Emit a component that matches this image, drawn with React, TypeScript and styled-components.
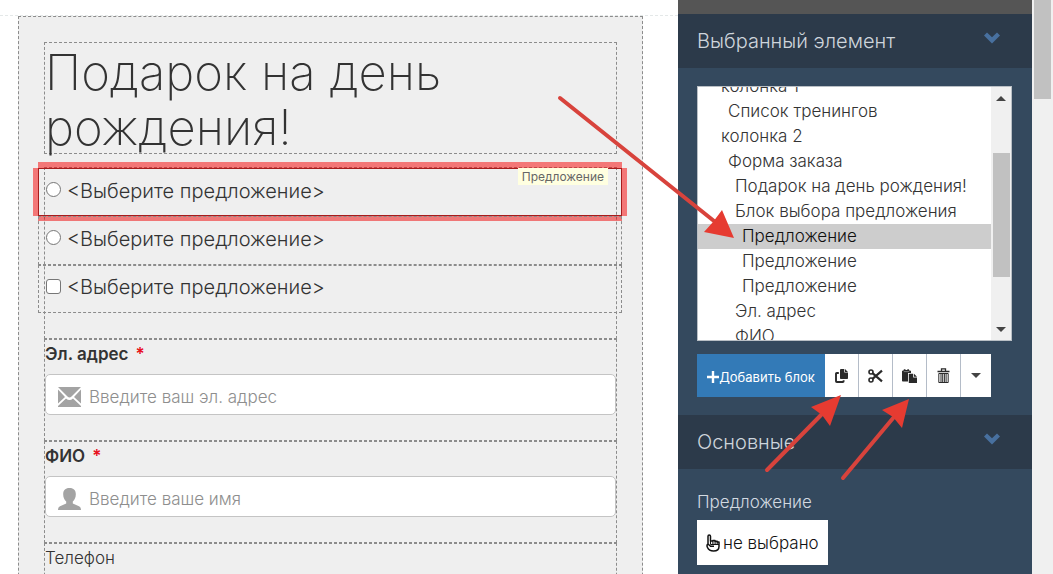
import React, { useEffect, useRef } from "react";
import styled, { createGlobalStyle, css } from "styled-components";

const GlobalStyle = createGlobalStyle`
  *, *::before, *::after { box-sizing: border-box; }
  body {
    margin: 0;
    background: #fff;
    color: #333;
    font-family: Inter, "Liberation Sans", sans-serif;
    font-size: 17px;
    font-weight: 300;
  }
  button, input, select { font: inherit; color: inherit; }
`;

const dashed = "1px dashed #8c8c8c";

const Page = styled.div`
  position: relative;
  display: flex;
  height: 100vh;
  overflow: hidden;
`;

const Preview = styled.main`
  flex: 1;
  min-width: 0;
  overflow: hidden;
  padding-top: 15px;
`;

const Canvas = styled.section`
  border-top: 1px dashed #e4e8e8;
  padding: 0 35px 0 18px;
`;

const FormPanel = styled.form`
  background: #efefef;
  border: ${dashed};
  padding: 25px;
`;

const TitleBlock = styled.div`
  border: ${dashed};
  margin-bottom: 13px;
`;

const Title = styled.h1`
  height: 110px;
  margin: 0;
  padding-top: 2px;
  font-size: 49px;
  line-height: 55px;
  font-weight: 200;
`;

const Block = styled.div`
  border: ${dashed};
  padding-bottom: 25px;
`;

const OfferList = styled.div`
  display: grid;
  grid-auto-rows: 1fr;
  min-height: 145px;
  margin: 0 -6px 0 -7px;
`;

const OfferRow = styled.label<{ $selected?: boolean }>`
  position: relative;
  display: flex;
  align-items: center;
  gap: 6px;
  padding: 0 7px 3px;
  border: ${dashed};
  font-size: 20px;
  ${(p) =>
    p.$selected &&
    css`
      border: 1px solid #a81c1c;
      box-shadow: 0 -6px 0 rgba(248, 0, 0, 0.5), 0 5px 0 rgba(240, 0, 0, 0.5),
        -5px 0 0 rgba(248, 0, 0, 0.5), 5px 0 0 rgba(248, 0, 0, 0.5);
    `}
`;

const Choice = styled.input`
  appearance: none;
  flex: none;
  width: 15px;
  height: 15px;
  margin: 0 0 2px;
  background: #fff;
  border: 1px solid #767676;
  border-radius: ${(p) => (p.type === "radio" ? "50%" : "3px")};
`;

const Tag = styled.span`
  position: absolute;
  top: -1px;
  right: 13px;
  padding: 0 4px;
  background: #ffffe0;
  color: #666;
  font-size: 12px;
  line-height: 17px;
  font-weight: 400;
`;

const FieldLabel = styled.label<{ $required?: boolean }>`
  display: block;
  margin-bottom: 6px;
  line-height: 28px;
  font-weight: ${(p) => (p.$required ? 600 : 300)};
`;

const Star = styled.span`
  margin-left: 7px;
  color: #e8101c;
`;

const InputShell = styled.div`
  display: flex;
  align-items: center;
  gap: 8px;
  height: 41px;
  padding: 0 12px;
  background: #fff;
  border: 1px solid #c4c4c4;
  border-radius: 5px;
  svg { flex: none; margin-top: 4px; }
`;

const TextInput = styled.input`
  flex: 1;
  min-width: 0;
  padding: 4px 0 0;
  border: 0;
  outline: 0;
  background: transparent;
  &::placeholder { color: #8e8e8e; opacity: 1; }
`;

const Sidebar = styled.aside`
  flex: none;
  width: 354px;
  overflow: hidden;
  border-top: 14px solid #555;
  background: #34495e;
`;

const SectionHeader = styled.button`
  display: flex;
  align-items: center;
  justify-content: space-between;
  width: 100%;
  height: 54px;
  padding: 0 32px 0 19px;
  border: 0;
  background: #2c3a4a;
  color: #ced5dc;
  font-size: 20px;
  text-align: left;
  svg { margin-bottom: 6px; }
`;

const SectionBody = styled.div`
  padding: 18px 20px 18px 19px;
`;

const ListBox = styled.div`
  display: flex;
  height: 255px;
  border: 1px solid #b9bfc5;
  background: #fff;
`;

const Tree = styled.select`
  flex: 1;
  min-width: 0;
  height: 100%;
  padding: 0;
  border: 0;
  border-radius: 0;
  outline: 0;
  background: #fff;
  color: #333;
  overflow: hidden;
`;

const TreeItem = styled.option<{ $level: number }>`
  height: 25px;
  padding: 2px 0 0 ${(p) => 23 + p.$level * 7}px;
  font-size: 17px;
  font-weight: 300;
  &:checked { background: #cdcdcd; }
`;

const Track = styled.div`
  display: flex;
  flex-direction: column;
  align-items: center;
  justify-content: space-between;
  width: 20px;
  padding: 9px 0 8px;
  background: #f0f0f0;
`;

const Thumb = styled.div`
  width: 17px;
  height: 124px;
  margin-top: 2px;
  background: #c1c1c1;
`;

const Triangle = styled.span<{ $up?: boolean }>`
  border: 5px solid transparent;
  border-top: ${(p) => (p.$up ? "0" : "5px solid #444")};
  border-bottom: ${(p) => (p.$up ? "5px solid #444" : "0")};
`;

const Toolbar = styled.div`
  display: flex;
  height: 43px;
  margin-top: 13px;
`;

const AddButton = styled.button`
  display: flex;
  align-items: center;
  justify-content: center;
  width: 128px;
  padding: 2px 0 0;
  border: 0;
  background: #337ab7;
  color: #fff;
  font-size: 13px;
  font-weight: 400;
  white-space: nowrap;
`;

const ToolButton = styled.button<{ $narrow?: boolean }>`
  display: flex;
  align-items: center;
  justify-content: center;
  width: ${(p) => (p.$narrow ? 30 : 34)}px;
  padding: 0;
  border: 0;
  border-right: 1px solid #b4bcc8;
  background: #fff;
  color: #2a2a2a;
  &:last-child { border-right: 0; }
`;

const OfferLabel = styled.label`
  display: block;
  margin: 2px 0 5px;
  line-height: 26px;
  color: #d3dae1;
`;

const OfferButton = styled.button`
  display: flex;
  align-items: center;
  gap: 3px;
  height: 45px;
  padding: 0 9px;
  border: 0;
  background: #fff;
  color: #111;
`;

const PageScroll = styled.div`
  flex: none;
  display: flex;
  justify-content: center;
  width: 21px;
  background: #f0f0f0;
`;

const PageThumb = styled.div`
  width: 17px;
  height: 99px;
  background: #c1c1c1;
`;

const Annotations = styled.svg`
  position: absolute;
  top: 0;
  right: 0;
  pointer-events: none;
`;

const Chevron = () => (
  <svg width="16" height="12" viewBox="0 0 16 12" fill="#48709f" aria-hidden="true">
    <path d="M0 3.4 3 .4 8 5.3 13 .4 16 3.4 8 11.5Z" />
  </svg>
);

const PlusIcon = () => (
  <svg width="12" height="12" viewBox="0 0 12 12" fill="currentColor" aria-hidden="true">
    <path d="M4.8 0h2.4v4.8H12v2.4H7.2V12H4.8V7.2H0V4.8h4.8z" />
  </svg>
);

const CopyIcon = () => (
  <svg width="13" height="14" viewBox="0 0 13 14" aria-hidden="true">
    <path d="M6 0h3.300v3.500H13v5.700q0 .8-.8.8H5.800Q5 10 5 9.200V1q0-1 1-1ZM10 0l3 2.900h-3z" fill="currentColor" />
    <path d="M3.800 4H1.800Q1 4 1 4.800v7.400q0 .8.800.8h6q.8 0 .8-.8v-1" fill="none" stroke="currentColor" strokeWidth="1.900" />
  </svg>
);

const CutIcon = () => (
  <svg width="15" height="14" viewBox="0 0 15 14" fill="none" stroke="currentColor" aria-hidden="true">
    <circle cx="3" cy="3" r="2" strokeWidth="1.600" />
    <circle cx="3" cy="11" r="2" strokeWidth="1.600" />
    <path d="M4.500 4.200 14 12.300M4.500 9.800 14 1.700" strokeWidth="2.200" />
  </svg>
);

const PasteIcon = () => (
  <svg width="15" height="14" viewBox="0 0 15 14" fill="currentColor" aria-hidden="true">
    <path d="M0 1.800h1.200L2 .2h1.500V1h1.800V.2h1.500l.8 1.600H9V4H6v8.500H.8q-.8 0-.8-.8z" />
    <path d="M1.800 2.600h5.400" stroke="#fff" strokeWidth=".4" />
    <path d="M6.800 4.800h4.400v3.700H15V14H6.800zM12 4.800l3 2.900h-3z" />
  </svg>
);

const TrashIcon = () => (
  <svg width="13" height="15" viewBox="0 0 13 15" fill="none" stroke="currentColor" aria-hidden="true">
    <path d="M.5 3.500h12M4.500 3V.8h4V3" strokeWidth="1.300" />
    <path d="M1.800 5.500h9.400v9H1.800zM4 6v8M5.700 6v8M7.400 6v8M9.100 6v8" />
  </svg>
);

const HandIcon = () => (
  <svg width="14" height="18" viewBox="0 0 14 18" fill="none" stroke="currentColor" strokeWidth="1.500" strokeLinejoin="round" aria-hidden="true">
    <path d="M2 10V2.200Q2 1 3.200 1T4.500 2.200V7h2.300v-.5H9v.8h2.200V8H13v4.500q0 4.500-5.500 4.500Q3 17 1.500 13.500Q.3 11 2 10L4.500 12.200H8" />
    <path d="M4.500 7v3.500M6.900 7v3.500M9.100 7v3.500M11.200 8v2.500M4.500 10.500H13" strokeWidth="1.100" />
  </svg>
);

const MailIcon = () => (
  <svg width="23" height="20" viewBox="0 0 23 20" fill="#a3a3a3" aria-hidden="true">
    <path d="M0 0h23l-9.500 9.500q-2 2-4 0ZM0 2.500 7 10 0 16.500ZM23 2.500v14L16 10ZM0 20v-1l8-7.500q3.500 3 7 0l8 7.500v1Z" />
  </svg>
);

const UserIcon = () => (
  <svg width="23" height="22" viewBox="0 0 23 22" fill="#a3a3a3" aria-hidden="true">
    <path d="M11.500 0c4.500 0 6.500 2.800 6.300 6.500 0 3.200-1.300 5.400-3 7v2l6.200 2.700q2 .9 2 3.800H0q0-2.900 2-3.800l6.200-2.700v-2c-1.700-1.600-3-3.800-3-7C5 2.800 7 0 11.500 0Z" />
  </svg>
);

const offers: ("radio" | "checkbox")[] = ["radio", "radio", "checkbox"];

const tree = [
  { text: "колонка 1", level: 0 },
  { text: "Список тренингов", level: 1 },
  { text: "колонка 2", level: 0 },
  { text: "Форма заказа", level: 1 },
  { text: "Подарок на день рождения!", level: 2 },
  { text: "Блок выбора предложения", level: 2 },
  { text: "Предложение", level: 3 },
  { text: "Предложение", level: 3 },
  { text: "Предложение", level: 3 },
  { text: "Эл. адрес", level: 2 },
  { text: "ФИО", level: 2 },
];

const fields = [
  { id: "email", label: "Эл. адрес", hint: "Введите ваш эл. адрес", required: true, icon: <MailIcon /> },
  { id: "name", label: "ФИО", hint: "Введите ваше имя", required: true, icon: <UserIcon /> },
  { id: "phone", label: "Телефон", hint: "", required: false, icon: null },
];

export default function App() {
  const treeRef = useRef<HTMLSelectElement>(null);
  useEffect(() => {
    if (treeRef.current) treeRef.current.scrollTop = 13;
  }, []);

  return (
    <>
      <GlobalStyle />
      <Page>
        <Preview>
          <Canvas>
            <FormPanel>
              <TitleBlock>
                <Title>Подарок на день рождения!</Title>
              </TitleBlock>
              <Block>
                <OfferList>
                  {offers.map((type, i) => (
                    <OfferRow key={i} $selected={i === 0}>
                      <Choice type={type} name={type === "radio" ? "offer" : "extra"} />
                      &lt;Выберите предложение&gt;
                      {i === 0 && <Tag>Предложение</Tag>}
                    </OfferRow>
                  ))}
                </OfferList>
              </Block>
              {fields.map((f) => (
                <Block key={f.id}>
                  <FieldLabel htmlFor={f.id} $required={f.required}>
                    {f.label}
                    {f.required && <Star>*</Star>}
                  </FieldLabel>
                  <InputShell>
                    {f.icon}
                    <TextInput id={f.id} placeholder={f.hint} />
                  </InputShell>
                </Block>
              ))}
            </FormPanel>
          </Canvas>
        </Preview>

        <Sidebar>
          <SectionHeader type="button" aria-expanded="true">
            Выбранный элемент
            <Chevron />
          </SectionHeader>
          <SectionBody>
            <ListBox>
              <Tree ref={treeRef} size={10} defaultValue="6" aria-label="Выбранный элемент">
                {tree.map((t, i) => (
                  <TreeItem key={i} value={String(i)} $level={t.level}>
                    {t.text}
                  </TreeItem>
                ))}
              </Tree>
              <Track>
                <Triangle $up />
                <Thumb />
                <Triangle />
              </Track>
            </ListBox>
            <Toolbar>
              <AddButton type="button">
                <PlusIcon />
                Добавить блок
              </AddButton>
              <ToolButton type="button" aria-label="Копировать"><CopyIcon /></ToolButton>
              <ToolButton type="button" aria-label="Вырезать"><CutIcon /></ToolButton>
              <ToolButton type="button" aria-label="Вставить"><PasteIcon /></ToolButton>
              <ToolButton type="button" aria-label="Удалить"><TrashIcon /></ToolButton>
              <ToolButton type="button" aria-label="Ещё" $narrow><Triangle /></ToolButton>
            </Toolbar>
          </SectionBody>
          <SectionHeader type="button" aria-expanded="true">
            Основные
            <Chevron />
          </SectionHeader>
          <SectionBody>
            <OfferLabel htmlFor="offer-pick">Предложение</OfferLabel>
            <OfferButton id="offer-pick" type="button">
              <HandIcon />
              не выбрано
            </OfferButton>
          </SectionBody>
        </Sidebar>

        <PageScroll>
          <PageThumb />
        </PageScroll>

        <Annotations width="1053" height="574" viewBox="0 0 1053 574" aria-hidden="true">
          <g stroke="#d8433c" strokeWidth="4" strokeLinecap="round">
            <path d="M560 98 714 221" />
            <path d="M767 470 823 413" />
            <path d="M843 478 894 417" />
          </g>
          <g fill="#e63b31">
            <path d="M734 238 704 232 713 222 722 210Z" />
            <path d="M841 395 830 426 822 415 811 407Z" />
            <path d="M909 399 902 428 893 417 882 410Z" />
          </g>
        </Annotations>
      </Page>
    </>
  );
}
